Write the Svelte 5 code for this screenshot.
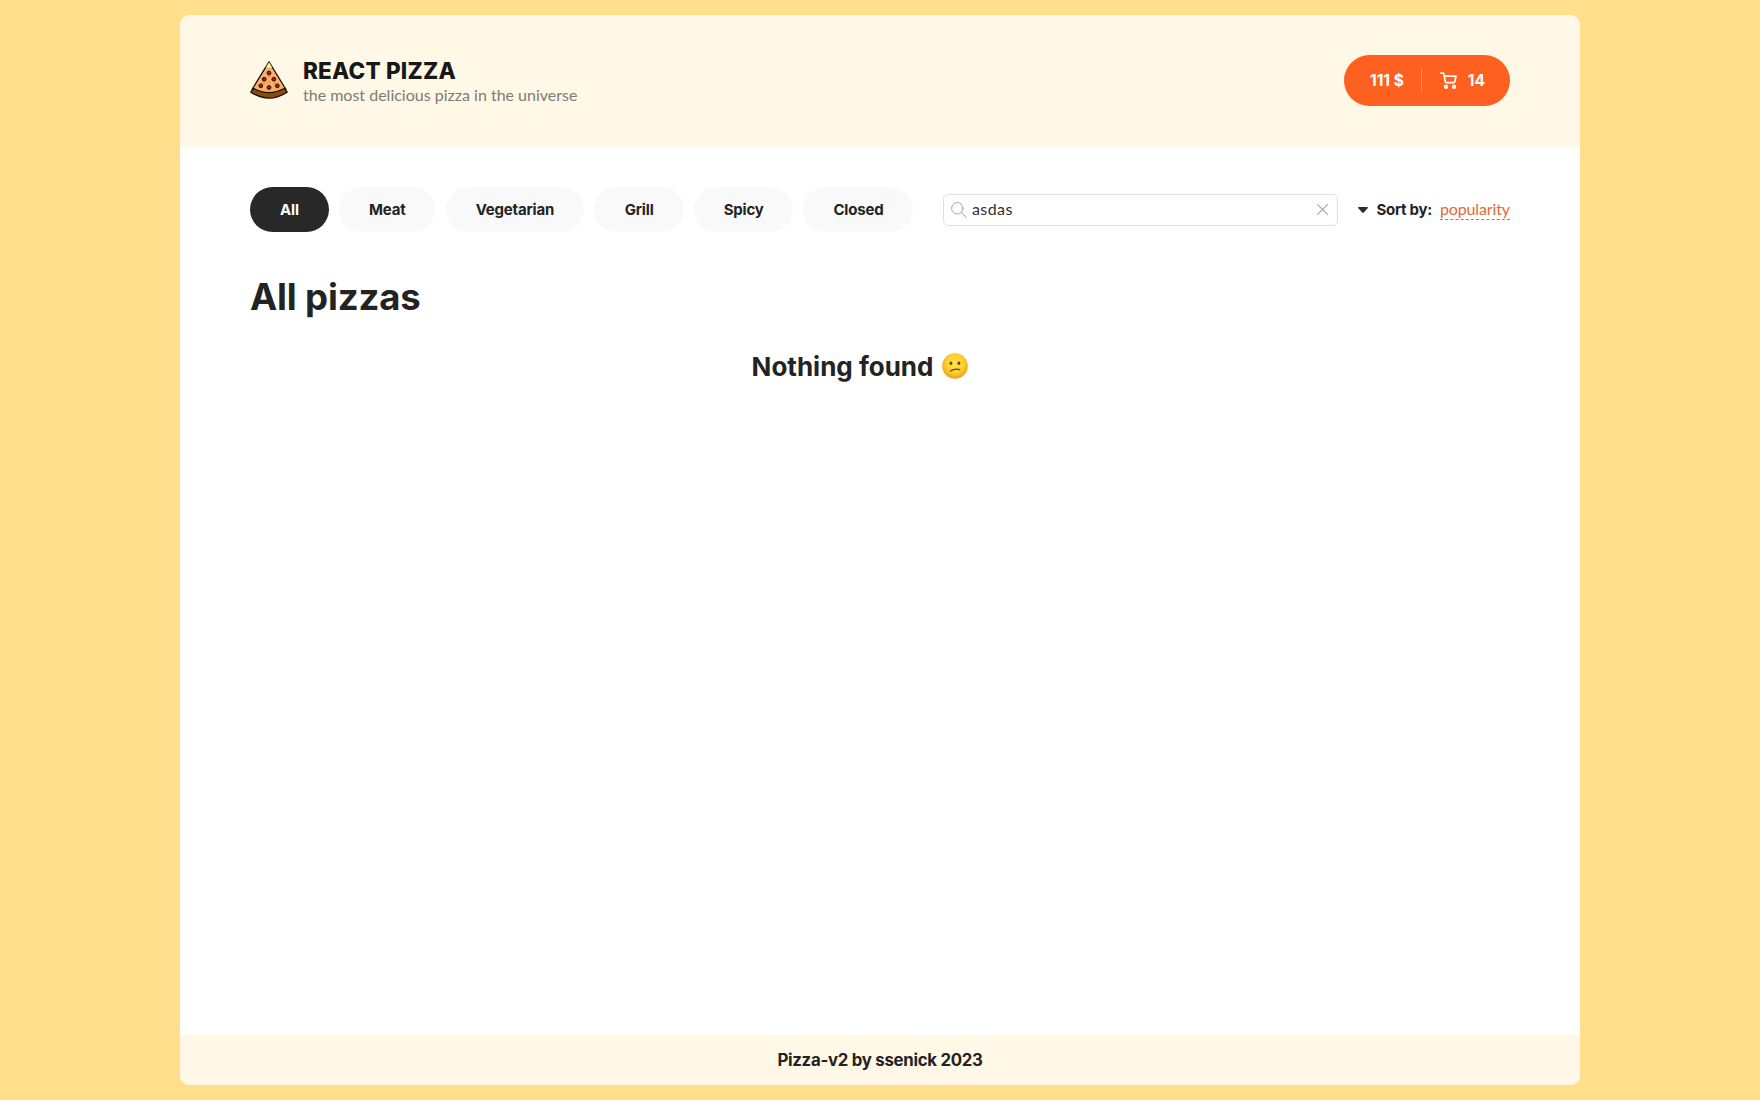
<script>
  const categories = [
    { name: 'All', key: 'all' },
    { name: 'Meat', key: 'meat' },
    { name: 'Vegetarian', key: 'vegetarian' },
    { name: 'Grill', key: 'grill' },
    { name: 'Spicy', key: 'spicy' },
    { name: 'Closed', key: 'closed' }
  ];
  const olives = [[19, 12], [14.2, 18.2], [23.8, 18.2], [10.8, 24.8], [19, 26.5], [27.3, 24.8]];
  let active = $state('all');
  let query = $state('asdas');
</script>

<div class="wrapper">
  <header>
    <div class="logo">
      <svg class="slice" viewBox="0 0 38 38" aria-hidden="true">
        <path d="M19 .8 2 28.5Q19 38 36 28.5Z" fill="#f6b26b" stroke="#17130c" stroke-width="1.3" stroke-linejoin="round" />
        <path d="M19 1.2 15.8 6.4H22.2Z" fill="#f7efb5" />
        <path d="M3.4 27.3Q19 36 34.6 27.3L37.2 31.2Q19 43 .8 31.2Z" fill="#8b4b12" stroke="#17130c" stroke-width="1.3" stroke-linejoin="round" />
        <path d="M12 22h3M17.5 21h3M23 22.5h3M17 15.5h4" stroke="#c98443" stroke-width=".8" />
        {#each olives as [cx, cy]}
          <circle {cx} {cy} r="1.9" fill="#c0140c" stroke="#32100a" stroke-width="1" />
        {/each}
      </svg>
      <div>
        <h1>REACT PIZZA</h1>
        <p>the most delicious pizza in the universe</p>
      </div>
    </div>
    <button class="cart">
      <span class="price">111 $</span>
      <span class="divider"></span>
      <svg class="trolley" viewBox="0 0 18 18" fill="none" stroke="#fff" stroke-width="1.8" stroke-linecap="round" stroke-linejoin="round" aria-hidden="true">
        <circle cx="6.3" cy="15.6" r="1.4" />
        <circle cx="14.8" cy="15.6" r="1.4" />
        <path d="M1 1.2H3.8L5.5 9.8Q5.8 11.2 7.2 11.2H14.2Q15.5 11.2 15.8 9.9L16.9 4.4H4.4" />
      </svg>
      <span class="count">14</span>
    </button>
  </header>

  <main>
    <div class="toolbar">
      <ul>
        {#each categories as c}
          <li class={c.key}><button class:active={active === c.key} onclick={() => (active = c.key)}>{c.name}</button></li>
        {/each}
      </ul>
      <label class="search">
        <svg class="lens" viewBox="0 0 16 16" fill="none" stroke="#a5a5a5" stroke-width="1" stroke-linecap="round" aria-hidden="true">
          <circle cx="6.3" cy="6.3" r="5.7" /><path d="m10.4 10.4 5 5" />
        </svg>
        <input bind:value={query} aria-label="Search" />
        <svg class="clear" viewBox="0 0 10 10" stroke="#a2a2a2" stroke-width="1" stroke-linecap="round" aria-hidden="true">
          <path d="m.5.5 9 9m0-9-9 9" />
        </svg>
      </label>
      <div class="sort">
        <svg class="caret" viewBox="0 0 10 6" aria-hidden="true"><path d="M.8 0H9.2Q10.4.2 9.6 1.2L5.8 5.6Q5 6.3 4.2 5.6L.4 1.2Q-.4.2.8 0Z" fill="#2c2c2c" /></svg>
        <b>Sort by:</b>
        <span>popularity</span>
      </div>
    </div>

    <h2>All pizzas</h2>
    <div class="empty">
      <h3>Nothing found</h3>
      <svg class="face" viewBox="0 0 26 26" role="img" aria-label="Confused face">
        <defs>
          <radialGradient id="skin" cx=".5" cy=".42" r=".58">
            <stop offset="0" stop-color="#ffe34d" />
            <stop offset=".6" stop-color="#fdd02f" />
            <stop offset="1" stop-color="#f29a14" />
          </radialGradient>
        </defs>
        <circle cx="13" cy="13" r="12.8" fill="url(#skin)" />
        <ellipse cx="8.9" cy="10.2" rx="1.4" ry="1.8" fill="#6b3c0b" />
        <ellipse cx="16.9" cy="10.2" rx="1.4" ry="1.8" fill="#6b3c0b" />
        <path d="M8.4 18.1Q12.5 15.3 17.8 16.6" fill="none" stroke="#6b3c0b" stroke-width="1.2" stroke-linecap="round" />
      </svg>
    </div>
  </main>

  <footer>Pizza-v2 by ssenick 2023</footer>
</div>

<style>
  :global(body) {
    background: #ffde8c;
  }
  :global(#app) {
    box-sizing: border-box;
    height: 1100px;
    padding: 15px 180px;
  }
  * {
    box-sizing: border-box;
    margin: 0;
    padding: 0;
  }
  .wrapper {
    display: flex;
    flex-direction: column;
    height: 1070px;
    overflow: hidden;
    border-radius: 10px;
    background: #fff;
    color: #232323;
    font-family: Lato, 'Liberation Sans', sans-serif;
  }
  svg {
    display: block;
    flex: none;
  }
  button {
    border: 0;
    font: inherit;
    cursor: pointer;
  }
  header {
    display: flex;
    align-items: center;
    justify-content: space-between;
    height: 132px;
    padding: 0 70px 2px;
    background: #fff8e7;
  }
  .logo {
    display: flex;
    align-items: center;
    gap: 15px;
  }
  .slice {
    width: 38px;
    height: 38px;
  }
  h1, h2, h3, b, li button, footer {
    font-family: Inter, 'Liberation Sans', sans-serif;
    font-weight: 700;
  }
  h1 {
    padding-top: 3px;
    color: #181818;
    font-size: 22.5px;
    font-weight: 800;
    line-height: 26px;
    letter-spacing: 0.2px;
  }
  .logo p {
    color: #7d7b76;
    font-size: 16px;
    line-height: 21px;
  }
  .cart {
    display: flex;
    align-items: center;
    width: 166px;
    height: 51px;
    padding: 0 25px 0 26px;
    border-radius: 30px;
    background: #fe611f;
    color: #fff;
    font: 700 15.5px Inter, 'Liberation Sans', sans-serif;
  }
  .price {
    width: 51px;
    text-align: left;
    white-space: nowrap;
  }
  .divider {
    width: 1px;
    height: 25px;
    margin-right: 18px;
    background: #fe8e5f;
  }
  .trolley {
    width: 17px;
    height: 17px;
    margin-right: 11px;
  }
  main {
    flex: 1;
    padding: 40px 70px 0;
  }
  .toolbar {
    display: flex;
    align-items: center;
    height: 45px;
  }
  ul {
    display: flex;
    gap: 10.3px;
    list-style: none;
  }
  li button {
    width: 100%;
    height: 45px;
    padding-bottom: 1px;
    border-radius: 30px;
    background: #f9f9f9;
    color: #232323;
    font-size: 15px;
    letter-spacing: -0.18px;
  }
  li .active {
    background: #282828;
    color: #fff;
  }
  .all { width: 79px; }
  .meat { width: 96px; }
  .vegetarian { width: 138.5px; }
  .grill { width: 89.5px; }
  .spicy { width: 99px; }
  .closed { width: 110px; }
  .search {
    display: flex;
    align-items: center;
    width: 395px;
    height: 32px;
    margin-left: 29.5px;
    padding: 0 9px 0 7px;
    border: 1px solid #dfdfdf;
    border-radius: 5px;
  }
  .lens {
    width: 16px;
    height: 16px;
    margin-right: 5px;
  }
  input {
    flex: 1;
    min-width: 0;
    padding-bottom: 2px;
    border: 0;
    outline: 0;
    background: none;
    color: #303030;
    font: 16px Lato, sans-serif;
    letter-spacing: 0.4px;
  }
  .clear {
    width: 11px;
    height: 11px;
  }
  .sort {
    display: flex;
    align-items: center;
    margin-left: auto;
    font-size: 16px;
  }
  .caret {
    width: 10px;
    height: 6px;
    margin-right: 8px;
  }
  .sort b {
    padding-bottom: 1px;
    font-size: 15px;
    letter-spacing: -0.28px;
  }
  .sort span {
    margin-left: 8px;
    padding-bottom: 1px;
    border-bottom: 1px dashed #e5673a;
    color: #e5673a;
    letter-spacing: -0.12px;
  }
  h2 {
    margin-top: 41px;
    font-size: 36.5px;
    line-height: 49px;
    letter-spacing: -0.15px;
  }
  .empty {
    display: flex;
    align-items: center;
    justify-content: center;
    gap: 9px;
    margin-top: 27px;
    padding-right: 40px;
  }
  h3 {
    font-size: 26px;
    line-height: 36px;
  }
  .face {
    width: 26px;
    height: 26px;
    margin-bottom: 3px;
  }
  footer {
    height: 50px;
    background: #fff8e7;
    font-size: 16.8px;
    line-height: 50px;
    letter-spacing: -0.28px;
    text-align: center;
  }
</style>
